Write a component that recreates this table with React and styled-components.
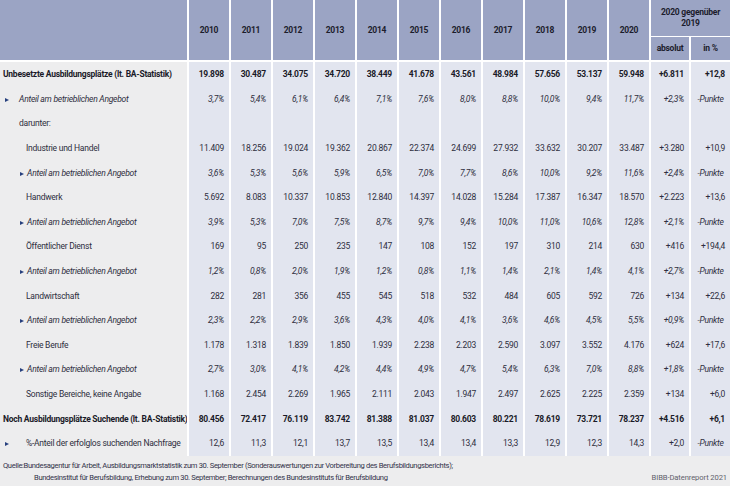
import React from "react";
import styled, { createGlobalStyle } from "styled-components";

const GlobalStyle = createGlobalStyle`
  html, body {
    margin: 0;
    padding: 0;
    background: #ededee;
  }
  body {
    font-family: "Liberation Sans Narrow", "Roboto", "Liberation Sans", sans-serif;
  }
`;

const Wrap = styled.div`
  width: 730px;
  height: 486px;
  background: #ededee;
  overflow: hidden;
`;

const Table = styled.table`
  width: 730px;
  table-layout: fixed;
  border-collapse: separate;
  border-spacing: 0;
  font-size: 8.5px;
  letter-spacing: -0.25px;
  color: #2b2b3b;
`;

const HeadCell = styled.th`
  background: #9ba4c4;
  color: #1c1c2c;
  font-weight: bold;
  text-align: center;
  vertical-align: middle;
  padding: 0;
  box-sizing: border-box;
  height: ${(p) => p.$h || 36}px;
  border-left: ${(p) => (p.$first ? "none" : "2px solid #fff")};
  border-bottom: ${(p) => (p.$split ? "1px solid #fff" : "2px solid #fff")};
  line-height: 11px;
`;

const Row = styled.tr`
  height: 24.6px;
`;

const Label = styled.td`
  height: 24.6px;
  box-sizing: border-box;
  padding: 0 0 0 ${(p) => p.$indent}px;
  white-space: nowrap;
  overflow: hidden;
  font-weight: ${(p) => (p.$bold ? "bold" : "normal")};
  font-style: ${(p) => (p.$italic ? "italic" : "normal")};
  color: ${(p) => (p.$bold ? "#1a1a28" : "#2e2e40")};
`;

const Bullet = styled.span`
  display: inline-block;
  width: 0;
  height: 0;
  border-top: 2.5px solid transparent;
  border-bottom: 2.5px solid transparent;
  border-left: 4px solid #27407e;
  margin-right: ${(p) => p.$gap}px;
  vertical-align: 0px;
`;

const Cell = styled.td`
  height: 24.6px;
  box-sizing: border-box;
  background: #e2e5ef;
  border-left: 2px solid #fff;
  text-align: ${(p) => (p.$center ? "center" : "right")};
  padding: 0 ${(p) => (p.$center ? 0 : 5)}px 0 0;
  font-weight: ${(p) => (p.$bold ? "bold" : "normal")};
  font-style: ${(p) => (p.$italic ? "italic" : "normal")};
  color: ${(p) => (p.$bold ? "#1a1a28" : "#2e2e40")};
  white-space: nowrap;
`;

const Footer = styled.div`
  position: relative;
  padding: 4px 3px 0 3px;
  font-size: 7.6px;
  letter-spacing: -0.35px;
  line-height: 12.5px;
  color: #33334a;
`;

const Indent = styled.div`
  padding-left: 31px;
`;

const Brand = styled.span`
  position: absolute;
  right: 3px;
  bottom: 0;
  letter-spacing: -0.1px;
  color: #62626c;
`;

const years = ["2010", "2011", "2012", "2013", "2014", "2015", "2016", "2017", "2018", "2019", "2020"];

const rows = [
  { label: "Unbesetzte Ausbildungsplätze (lt. BA-Statistik)", bold: true, indent: 3, vals: ["19.898", "30.487", "34.075", "34.720", "38.449", "41.678", "43.561", "48.984", "57.656", "53.137", "59.948", "+6.811", "+12,8"] },
  { label: "Anteil am betrieblichen Angebot", bullet: true, italic: true, indent: 5, gap: 10, vals: ["3,7%", "5,4%", "6,1%", "6,4%", "7,1%", "7,6%", "8,0%", "8,8%", "10,0%", "9,4%", "11,7%", "+2,3%", "-Punkte"] },
  { label: "darunter:", indent: 19, vals: [] },
  { label: "Industrie und Handel", indent: 26, vals: ["11.409", "18.256", "19.024", "19.362", "20.867", "22.374", "24.699", "27.932", "33.632", "30.207", "33.487", "+3.280", "+10,9"] },
  { label: "Anteil am betrieblichen Angebot", bullet: true, italic: true, indent: 20, gap: 3, vals: ["3,6%", "5,3%", "5,6%", "5,9%", "6,5%", "7,0%", "7,7%", "8,6%", "10,0%", "9,2%", "11,6%", "+2,4%", "-Punkte"] },
  { label: "Handwerk", indent: 26, vals: ["5.692", "8.083", "10.337", "10.853", "12.840", "14.397", "14.028", "15.284", "17.387", "16.347", "18.570", "+2.223", "+13,6"] },
  { label: "Anteil am betrieblichen Angebot", bullet: true, italic: true, indent: 20, gap: 3, vals: ["3,9%", "5,3%", "7,0%", "7,5%", "8,7%", "9,7%", "9,4%", "10,0%", "11,0%", "10,6%", "12,8%", "+2,1%", "-Punkte"] },
  { label: "Öffentlicher Dienst", indent: 26, vals: ["169", "95", "250", "235", "147", "108", "152", "197", "310", "214", "630", "+416", "+194,4"] },
  { label: "Anteil am betrieblichen Angebot", bullet: true, italic: true, indent: 20, gap: 3, vals: ["1,2%", "0,8%", "2,0%", "1,9%", "1,2%", "0,8%", "1,1%", "1,4%", "2,1%", "1,4%", "4,1%", "+2,7%", "-Punkte"] },
  { label: "Landwirtschaft", indent: 26, vals: ["282", "281", "356", "455", "545", "518", "532", "484", "605", "592", "726", "+134", "+22,6"] },
  { label: "Anteil am betrieblichen Angebot", bullet: true, italic: true, indent: 20, gap: 3, vals: ["2,3%", "2,2%", "2,9%", "3,6%", "4,3%", "4,0%", "4,1%", "3,6%", "4,6%", "4,5%", "5,5%", "+0,9%", "-Punkte"] },
  { label: "Freie Berufe", indent: 26, vals: ["1.178", "1.318", "1.839", "1.850", "1.939", "2.238", "2.203", "2.590", "3.097", "3.552", "4.176", "+624", "+17,6"] },
  { label: "Anteil am betrieblichen Angebot", bullet: true, italic: true, indent: 20, gap: 3, vals: ["2,7%", "3,0%", "4,1%", "4,2%", "4,4%", "4,9%", "4,7%", "5,4%", "6,3%", "7,0%", "8,8%", "+1,8%", "-Punkte"] },
  { label: "Sonstige Bereiche, keine Angabe", indent: 26, vals: ["1.168", "2.454", "2.269", "1.965", "2.111", "2.043", "1.947", "2.497", "2.625", "2.225", "2.359", "+134", "+6,0"] },
  { label: "Noch Ausbildungsplätze Suchende (lt. BA-Statistik)", bold: true, indent: 3, vals: ["80.456", "72.417", "76.119", "83.742", "81.388", "81.037", "80.603", "80.221", "78.619", "73.721", "78.237", "+4.516", "+6,1"] },
  { label: "%-Anteil der erfolglos suchenden Nachfrage", bullet: true, indent: 5, gap: 17, vals: ["12,6", "11,3", "12,1", "13,7", "13,5", "13,4", "13,4", "13,3", "12,9", "12,3", "14,3", "+2,0", "-Punkte"] },
];

function DataRow({ row }) {
  const cells = row.vals.length ? row.vals : Array(13).fill("");
  return (
    <Row>
      <Label $indent={row.indent} $bold={row.bold} $italic={row.italic}>
        {row.bullet && <Bullet $gap={row.gap} />}
        {row.label}
      </Label>
      {cells.map((v, i) => {
        const punkte = v === "-Punkte";
        return (
          <Cell
            key={i}
            $bold={row.bold}
            $italic={row.italic || punkte}
            $center={punkte}
          >
            {v}
          </Cell>
        );
      })}
    </Row>
  );
}

export default function App() {
  return (
    <Wrap>
      <GlobalStyle />
      <Table>
        <colgroup>
          <col style={{ width: 187 }} />
          {years.map((y) => (
            <col key={y} style={{ width: 42 }} />
          ))}
          <col style={{ width: 40 }} />
          <col style={{ width: 41 }} />
        </colgroup>
        <thead>
          <tr>
            <HeadCell rowSpan={2} $first $h={37} />
            {years.map((y) => (
              <HeadCell key={y} rowSpan={2}>
                {y}
              </HeadCell>
            ))}
            <HeadCell colSpan={2} $split $h={37}>
              2020 gegenüber
              <br />
              2019
            </HeadCell>
          </tr>
          <tr>
            <HeadCell $h={25}>absolut</HeadCell>
            <HeadCell $h={25}>in %</HeadCell>
          </tr>
        </thead>
        <tbody>
          {rows.map((r, i) => (
            <DataRow key={i} row={r} />
          ))}
        </tbody>
      </Table>
      <Footer>
        Quelle:Bundesagentur für Arbeit, Ausbildungsmarktstatistik zum 30. September (Sonderauswertungen zur Vorbereitung des Berufsbildungsberichts);
        <Indent>
          Bundesinstitut für Berufsbildung, Erhebung zum 30. September; Berechnungen des Bundesinstituts für Berufsbildung
        </Indent>
        <Brand>BIBB-Datenreport 2021</Brand>
      </Footer>
    </Wrap>
  );
}
